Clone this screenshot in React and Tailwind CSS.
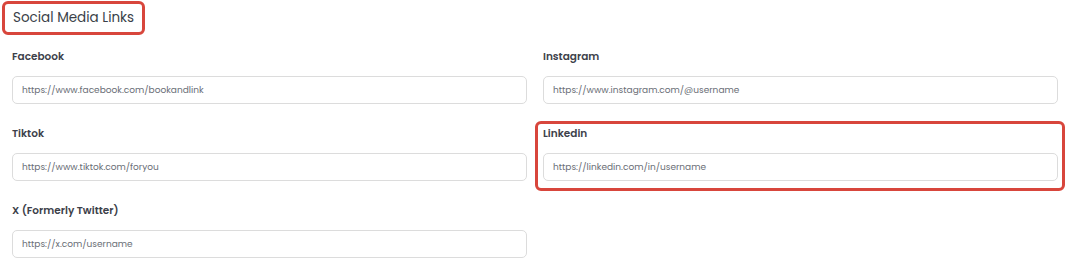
const fields = [
  { label: "Facebook", value: "https://www.facebook.com/bookandlink" },
  { label: "Instagram", value: "https://www.instagram.com/@username" },
  { label: "Tiktok", value: "https://www.tiktok.com/foryou" },
  { label: "Linkedin", value: "https://linkedin.com/in/username", marked: true },
  { label: "X (Formerly Twitter)", value: "https://x.com/username" },
];

function Field({ label, value, marked }) {
  return (
    <div className="relative flex flex-col">
      {marked && (
        <span className="pointer-events-none absolute -left-[8px] -right-[7px] -top-[3px] -bottom-[10px] rounded-[6px] border-[3px] border-[#d8463c]" />
      )}
      <label className="h-[20px] text-[10.5px] font-semibold leading-[20px] text-[#3d414a]">
        {label}
      </label>
      <input
        readOnly
        value={value}
        className="mt-[9px] h-[28px] w-full rounded-[5px] border border-[#dcdcdc] bg-white px-[9px] text-[9px] text-[#6a6e76] outline-none"
      />
    </div>
  );
}

export default function App() {
  return (
    <div className="min-h-[274px] bg-white pl-[12px] pr-[13px] pt-[1px] font-['Poppins','Inter',sans-serif]">
      <div className="flex">
        <h2 className="ml-[-10px] rounded-[6px] border-[3px] border-[#d8463c] px-[8px] py-[4px] text-[13.5px] leading-[20px] text-[#3a3f48]">
          Social Media Links
        </h2>
      </div>
      <div className="mt-[12px] grid grid-cols-2 gap-x-[16px] gap-y-[20px]">
        {fields.map((f) => (
          <Field key={f.label} {...f} />
        ))}
      </div>
    </div>
  );
}
